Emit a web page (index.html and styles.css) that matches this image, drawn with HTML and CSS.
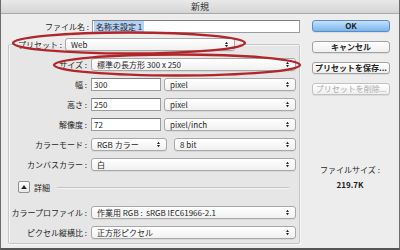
FILE: index.html
```html
<!DOCTYPE html>
<html lang="ja">
<head>
    <meta charset="UTF-8">
    <title>新規</title>
    <link rel="stylesheet" href="styles.css">
</head>
<body>
    <div class="window">
        <div class="titlebar">新規</div>

        <div class="dialog">
            <div class="form">
                <div class="name-row">
                    <span class="label">ファイル名 :</span>
                    <div class="field name-field"><span class="selected">名称未設定 1</span></div>
                </div>

                <fieldset class="group">
                    <legend class="preset">
                        <span class="label">プリセット :</span>
                        <div class="popup preset-popup">Web<svg class="arrows" viewBox="0 0 5 9"><path d="M2.5 0L5 3.5H0z M2.5 9L0 5.5H5z"/></svg></div>
                    </legend>

                    <div class="rows">
                        <span class="label">サイズ :</span>
                        <div class="popup">標準の長方形 300 x 250<svg class="arrows" viewBox="0 0 5 9"><path d="M2.5 0L5 3.5H0z M2.5 9L0 5.5H5z"/></svg></div>

                        <span class="label">幅 :</span>
                        <div class="pair">
                            <div class="field num">300</div>
                            <div class="popup">pixel<svg class="arrows" viewBox="0 0 5 9"><path d="M2.5 0L5 3.5H0z M2.5 9L0 5.5H5z"/></svg></div>
                        </div>

                        <span class="label">高さ :</span>
                        <div class="pair">
                            <div class="field num">250</div>
                            <div class="popup">pixel<svg class="arrows" viewBox="0 0 5 9"><path d="M2.5 0L5 3.5H0z M2.5 9L0 5.5H5z"/></svg></div>
                        </div>

                        <span class="label">解像度 :</span>
                        <div class="pair">
                            <div class="field num">72</div>
                            <div class="popup">pixel/inch<svg class="arrows" viewBox="0 0 5 9"><path d="M2.5 0L5 3.5H0z M2.5 9L0 5.5H5z"/></svg></div>
                        </div>

                        <span class="label">カラーモード :</span>
                        <div class="pair mode">
                            <div class="popup mode-popup">RGB カラー<svg class="arrows" viewBox="0 0 5 9"><path d="M2.5 0L5 3.5H0z M2.5 9L0 5.5H5z"/></svg></div>
                            <div class="popup">8 bit<svg class="arrows" viewBox="0 0 5 9"><path d="M2.5 0L5 3.5H0z M2.5 9L0 5.5H5z"/></svg></div>
                        </div>

                        <span class="label">カンバスカラー :</span>
                        <div class="popup">白<svg class="arrows" viewBox="0 0 5 9"><path d="M2.5 0L5 3.5H0z M2.5 9L0 5.5H5z"/></svg></div>

                        <div class="details">
                            <span class="disclosure"><svg viewBox="0 0 7 5"><path d="M3.5 0L7 5H0z"/></svg></span>
                            <span class="details-text">詳細</span>
                            <span class="rule"></span>
                        </div>

                        <span class="label">カラープロファイル :</span>
                        <div class="popup">作業用 RGB :&nbsp; sRGB IEC61966-2.1<svg class="arrows" viewBox="0 0 5 9"><path d="M2.5 0L5 3.5H0z M2.5 9L0 5.5H5z"/></svg></div>

                        <span class="label">ピクセル縦横比 :</span>
                        <div class="popup">正方形ピクセル<svg class="arrows" viewBox="0 0 5 9"><path d="M2.5 0L5 3.5H0z M2.5 9L0 5.5H5z"/></svg></div>
                    </div>
                </fieldset>
            </div>

            <div class="side">
                <button class="btn primary">OK</button>
                <button class="btn">キャンセル</button>
                <button class="btn">プリセットを保存...</button>
                <button class="btn" disabled>プリセットを削除...</button>

                <div class="filesize">
                    <p>ファイルサイズ :</p>
                    <p class="size">219.7K</p>
                </div>
            </div>
        </div>

        <!-- hand drawn marks over the dialog -->
        <svg class="marks" viewBox="0 0 400 250">
            <ellipse cx="129" cy="43" rx="116" ry="10.5"/>
            <ellipse cx="177" cy="65" rx="123" ry="10.5"/>
        </svg>
    </div>
</body>
</html>
```

FILE: styles.css
```css
html, body {
    margin: 0;
    background-color: #ededed;
    font-family: "Noto Sans CJK JP", "Liberation Sans", sans-serif;
    font-size: 8px;
    color: #1e1e1e;
}

.window {
    position: relative;
    width: 400px;
    height: 250px;
    box-sizing: border-box;
    border-left: 1px solid #6b6b6b;
    border-right: 1px solid #6b6b6b;
    border-bottom: 2px solid #555;
    overflow: hidden;
}

.titlebar {
    height: 13px;
    line-height: 13px;
    text-align: center;
    font-size: 9px;
    background: linear-gradient(#e9e9e9, #d4d4d4);
    border-bottom: 1px solid #a9a9a9;
    color: #333;
}

.dialog {
    display: flex;
    padding-top: 6px;
}

.form {
    width: 299px;
}

.label {
    text-align: right;
    white-space: nowrap;
    line-height: 13px;
}

.name-row {
    display: flex;
    gap: 3px;
}

.name-row .label {
    width: 88px;
}

.field {
    height: 13px;
    box-sizing: border-box;
    background: #fff;
    border: 1px solid #9c9c9c;
    border-top-color: #7d7d7d;
    padding: 0 3px;
    line-height: 11px;
    white-space: nowrap;
}

.name-field {
    flex: 1;
    padding-left: 1px;
}

.selected {
    background: #b3d2f5;
    padding: 0 2px;
}

.popup {
    position: relative;
    height: 13px;
    box-sizing: border-box;
    background: linear-gradient(#ffffff, #f1f1f1);
    border: 1px solid #a8a8a8;
    border-radius: 3px;
    box-shadow: 0 1px 0 rgba(0, 0, 0, 0.06);
    padding: 0 14px 0 5px;
    line-height: 11px;
    white-space: nowrap;
}

.arrows {
    position: absolute;
    right: 6px;
    top: 2px;
    width: 3px;
    height: 7px;
    fill: #222;
}

.group {
    margin: 5px 0 0 7px;
    padding: 7px 3px 4px 0;
    border: 1px solid #c6c6c6;
    border-radius: 2px;
    background-color: #e6e6e6;
    box-shadow: 1px 1px 0 #f7f7f7, inset 1px 1px 0 #f7f7f7;
}

.preset {
    display: flex;
    gap: 3px;
    margin-left: 6px;
    padding: 0 4px 0 3px;
}

.preset-popup {
    width: 170px;
}

.rows {
    display: grid;
    grid-template-columns: 78px 205px;
    column-gap: 4px;
    row-gap: 7px;
}

.pair {
    display: flex;
    gap: 3px;
}

.pair .popup {
    flex: 1;
}

.num {
    width: 70px;
    padding-left: 2px;
}

.mode {
    gap: 7px;
}

.mode .mode-popup {
    flex: none;
    width: 76px;
}

.details {
    grid-column: 1 / 3;
    display: flex;
    align-items: center;
    gap: 4px;
    margin: 3px 7px 6px 9px;
    height: 12px;
}

.disclosure {
    width: 12px;
    height: 12px;
    box-sizing: border-box;
    border: 1px solid #8f8f8f;
    border-radius: 2px;
    background: linear-gradient(#fdfdfd, #e9e9e9);
    display: flex;
    align-items: center;
    justify-content: center;
}

.disclosure svg {
    width: 6px;
    height: 4px;
    fill: #222;
}

.rule {
    flex: 1;
    height: 1px;
    margin-left: 3px;
    background: #c3c3c3;
    box-shadow: 0 1px 0 #f6f6f6;
}

.side {
    display: flex;
    flex-direction: column;
    gap: 9px;
    margin-left: 12px;
    width: 78px;
}

.btn {
    height: 12px;
    padding: 0;
    font-family: inherit;
    font-size: 8px;
    font-weight: bold;
    line-height: 10px;
    white-space: nowrap;
    color: #222;
    background: linear-gradient(#ffffff, #efefef);
    border: 1px solid #a2a2a2;
    border-radius: 3px;
    box-shadow: 0 1px 0 rgba(0, 0, 0, 0.07);
}

.btn.primary {
    background: linear-gradient(#c5e0fb, #79b6ee);
    border-color: #5d8bc5;
}

.btn:disabled {
    color: #a9a9a9;
    font-weight: normal;
    border-color: #c2c2c2;
}

.filesize {
    margin-top: 60px;
    text-align: center;
    margin-left: -2px;
}

.filesize p {
    margin: 0 0 4px;
    line-height: 11px;
}

.filesize .size {
    font-weight: bold;
}

.marks {
    position: absolute;
    left: -1px;
    top: 0;
    width: 400px;
    height: 250px;
    pointer-events: none;
    fill: none;
    stroke: #b1262b;
    stroke-width: 2.4;
}
```
